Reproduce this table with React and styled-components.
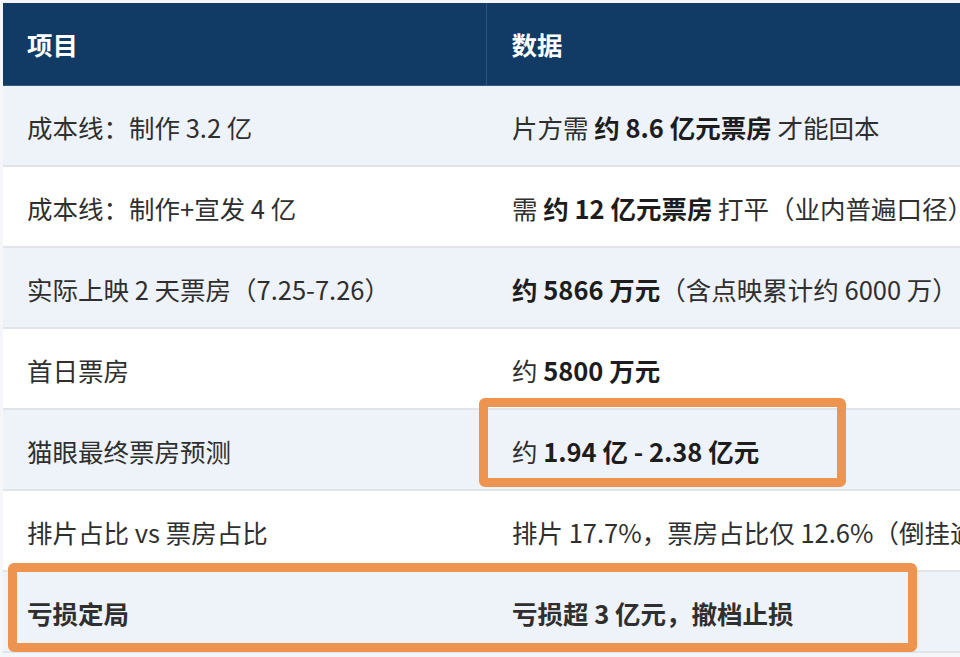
import styled, { createGlobalStyle } from 'styled-components';

const GlobalStyle = createGlobalStyle`
  html, body {
    margin: 0;
    padding: 0;
    background: #f4f6f9;
  }
  body {
    font-family: "Noto Sans CJK SC", "Noto Sans", sans-serif;
    overflow: hidden;
  }
`;

const rows = [
  { item: '成本线：制作 3.2 亿', data: <>片方需 <b>约 8.6 亿元票房</b> 才能回本</> },
  { item: '成本线：制作+宣发 4 亿', data: <>需 <b>约 12 亿元票房</b> 打平（业内普遍口径）</> },
  { item: '实际上映 2 天票房（7.25-7.26）', data: <><b>约 5866 万元</b>（含点映累计约 6000 万）</> },
  { item: '首日票房', data: <>约 <b>5800 万元</b></> },
  { item: '猫眼最终票房预测', data: <>约 <b>1.94 亿 - 2.38 亿元</b></> },
  { item: '排片占比 vs 票房占比', data: <>排片 17.7%，票房占比仅 12.6%（倒挂逾 5 个百分点）</> },
  { item: '亏损定局', data: '亏损超 3 亿元，撤档止损', strong: true },
];

export default function App(){
    return(
        <Page>
            <GlobalStyle />
            <Frame>
                <Table>
                    <thead>
                        <tr>
                            <Th>项目</Th>
                            <Th>数据</Th>
                        </tr>
                    </thead>
                    <tbody>
                        {rows.map((r, i) => (
                            <Row key={i} $shade={i % 2 === 0}>
                                <Td $strong={r.strong}>{r.item}</Td>
                                <Td $strong={r.strong}>{r.data}</Td>
                            </Row>
                        ))}
                    </tbody>
                </Table>
                <Highlight $top={395} $left={476} $width={367} $height={89} />
                <Highlight $top={560} $left={5} $width={909} $height={89} />
            </Frame>
        </Page>
    );
}

const Page = styled.div`
    width: 960px;
    height: 657px;
    overflow: hidden;
    padding: 3px 0 0 3px;
    box-sizing: border-box;
`;

const Frame = styled.div`
    position: relative;
    width: 1200px;
`;

const Table = styled.table`
    width: 1200px;
    border-collapse: collapse;
    table-layout: fixed;
`;

const Th = styled.th`
    height: 82px;
    padding: 0 24px;
    box-sizing: border-box;
    background: #113b65;
    color: #ffffff;
    font-size: 25.5px;
    font-weight: 700;
    text-align: left;
    border-bottom: 1px solid #355c85;

    &:first-child {
        width: 483px;
        border-right: 1px solid #2c527b;
    }
    &:last-child {
        padding-left: 25px;
    }
`;

const Row = styled.tr`
    background: ${p => p.$shade ? '#eef2f9' : '#ffffff'};
    border-bottom: 2px solid #e1e4e9;
`;

const Td = styled.td`
    height: 81px;
    padding: 2px 24px 0;
    box-sizing: border-box;
    font-size: 25.5px;
    color: #2f2f2f;
    white-space: nowrap;
    overflow: hidden;
    font-weight: ${p => p.$strong ? 700 : 400};

    b {
        font-weight: 700;
        color: #1d1d1d;
    }
    &:last-child {
        padding-left: 26px;
    }
`;

const Highlight = styled.div`
    position: absolute;
    top: ${p => p.$top}px;
    left: ${p => p.$left}px;
    width: ${p => p.$width}px;
    height: ${p => p.$height}px;
    border: 9px solid #ec9450;
    border-radius: 6px;
    box-sizing: border-box;
    pointer-events: none;
`;
